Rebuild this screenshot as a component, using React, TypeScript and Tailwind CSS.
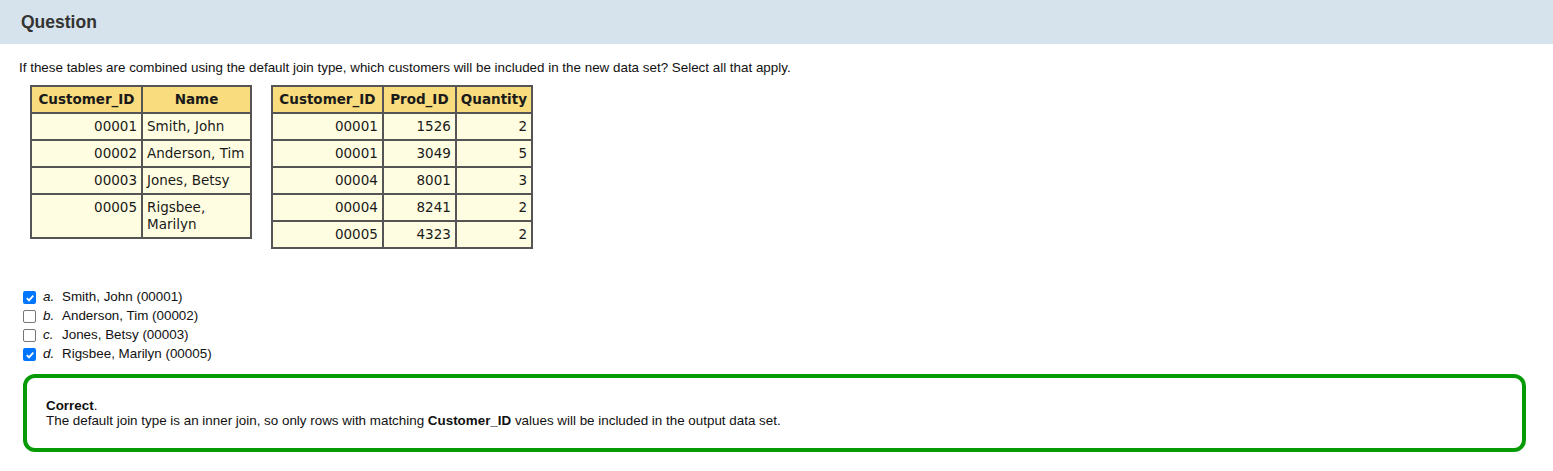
import React from 'react';

const customers = [
  { id: '00001', name: 'Smith, John' },
  { id: '00002', name: 'Anderson, Tim' },
  { id: '00003', name: 'Jones, Betsy' },
  { id: '00005', name: 'Rigsbee, Marilyn' },
];

const orders = [
  { id: '00001', prod: '1526', qty: '2' },
  { id: '00001', prod: '3049', qty: '5' },
  { id: '00004', prod: '8001', qty: '3' },
  { id: '00004', prod: '8241', qty: '2' },
  { id: '00005', prod: '4323', qty: '2' },
];

const options = [
  { letter: 'a.', label: 'Smith, John (00001)', checked: true },
  { letter: 'b.', label: 'Anderson, Tim (00002)', checked: false },
  { letter: 'c.', label: 'Jones, Betsy (00003)', checked: false },
  { letter: 'd.', label: 'Rigsbee, Marilyn (00005)', checked: true },
];

const th = 'border-2 border-[#555] bg-[#f8dc7d] px-[4px] h-[27px] font-bold text-[13.5px] text-[#1a1a1a]';
const td = 'border-2 border-[#555] bg-[#fffde1] px-[4px] py-[4px] leading-[17px] align-top text-[#1a1a1a]';

const Check = ({ checked }: { checked: boolean }) =>
  checked ? (
    <span className="w-[13px] h-[13px] rounded-[2px] bg-[#0075ff] flex items-center justify-center">
      <svg width="10" height="10" viewBox="0 0 10 10">
        <path d="M1.8 5.2 L4 7.4 L8.3 2.6" stroke="white" strokeWidth="1.8" fill="none" />
      </svg>
    </span>
  ) : (
    <span className="w-[13px] h-[13px] rounded-[2px] border border-[#767676] bg-white" />
  );

export default function App() {
  return (
    <div className="w-[1553px] h-[471px] bg-white font-['Liberation_Sans',Arial,sans-serif] text-[13.4px] text-[#111]">
      <div className="h-[44px] bg-[#d7e3ec] flex items-center px-[21px]">
        <h2 className="text-[17.5px] font-bold text-[#333]">Question</h2>
      </div>
      <div className="pl-[19px] pr-[27px]">
        <p className="mt-[16px] leading-[15px]">
          If these tables are combined using the default join type, which customers will be included in the new data set? Select all that apply.
        </p>
        <div className="flex gap-[19px] items-start mt-[10px] ml-[11px] font-['DejaVu_Sans',Verdana,sans-serif] text-[13.5px] leading-[15px]">
          <table className="border-collapse w-[222px]">
            <thead>
              <tr>
                <th className={`${th} w-[111px]`}>Customer_ID</th>
                <th className={th}>Name</th>
              </tr>
            </thead>
            <tbody>
              {customers.map((c) => (
                <tr key={c.id}>
                  <td className={`${td} text-right`}>{c.id}</td>
                  <td className={`${td} text-left`}>{c.name}</td>
                </tr>
              ))}
            </tbody>
          </table>
          <table className="border-collapse w-[262px]">
            <thead>
              <tr>
                <th className={`${th} w-[112px]`}>Customer_ID</th>
                <th className={`${th} w-[74px]`}>Prod_ID</th>
                <th className={th}>Quantity</th>
              </tr>
            </thead>
            <tbody>
              {orders.map((o, i) => (
                <tr key={i}>
                  <td className={`${td} text-right`}>{o.id}</td>
                  <td className={`${td} text-right`}>{o.prod}</td>
                  <td className={`${td} text-right`}>{o.qty}</td>
                </tr>
              ))}
            </tbody>
          </table>
        </div>
        <div className="mt-[39px] ml-[4px] flex flex-col">
          {options.map((o) => (
            <label key={o.letter} className="flex items-center h-[19px] gap-[6px]">
              <Check checked={o.checked} />
              <span className="italic w-[13px] ml-[1px]">{o.letter}</span>
              <span>{o.label}</span>
            </label>
          ))}
        </div>
        <div className="mt-[10px] ml-[4px] h-[78px] border-4 border-[#079a07] rounded-[12px] pl-[19px] pt-[20px] leading-[15px]">
          <p>
            <span className="font-bold">Correct</span>.
          </p>
          <p>
            The default join type is an inner join, so only rows with matching <span className="font-bold">Customer_ID</span> values will be included in the output data set.
          </p>
        </div>
      </div>
    </div>
  );
}
